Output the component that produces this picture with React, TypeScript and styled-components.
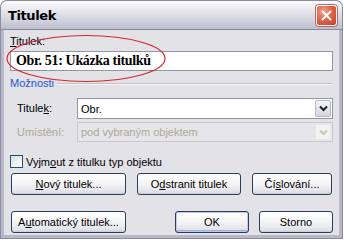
import React from "react";
import styled, { createGlobalStyle } from "styled-components";

const Global = createGlobalStyle`
  html, body { margin: 0; padding: 0; background: #ffffff; }
  body { font-family: Tahoma, "Liberation Sans", Arial, sans-serif; font-size: 11px; color: #000; }
`;

const Window = styled.div`
  width: 343px;
  height: 239px;
  display: flex;
  flex-direction: column;
  position: relative;
`;

const TitleBar = styled.div`
  height: 29px;
  flex: none;
  box-sizing: border-box;
  display: flex;
  align-items: center;
  justify-content: space-between;
  padding: 1px 5px 0 7px;
  border-radius: 7px 7px 0 0;
  border: 1px solid #8b8a9e;
  border-bottom: none;
  background: linear-gradient(#fbfbfd 0%, #e6e6ee 35%, #d2d2de 70%, #bdbdcd 100%);
`;

const TitleText = styled.span`
  font-family: Tahoma, "DejaVu Sans", sans-serif;
  font-weight: bold;
  font-size: 13px;
  letter-spacing: -0.4px;
  color: #000;
`;

const CloseButton = styled.div`
  width: 21px;
  height: 21px;
  box-sizing: border-box;
  border: 1px solid #ffffff;
  border-radius: 3px;
  background: radial-gradient(circle at 35% 30%, #f2a690 0%, #e06448 45%, #c4402c 100%);
  display: flex;
  align-items: center;
  justify-content: center;
  box-shadow: 0 0 0 1px #b86a62;
`;

const Frame = styled.div`
  flex: 1;
  display: flex;
  flex-direction: column;
  box-sizing: border-box;
  border: 4px solid #b9b8ca;
  border-top: none;
  box-shadow: inset 1px 0 0 #e3e3ea, inset -1px 0 0 #e3e3ea;
  outline: 1px solid #8b8a9e;
  outline-offset: -1px;
  background: #e3e2e7;
  padding: 6px 6px 0 6px;
`;

const Label = styled.div<{ $disabled?: boolean; $indent?: number; $width?: number }>`
  line-height: 13px;
  height: 13px;
  color: ${(p) => (p.$disabled ? "#aca899" : "#000")};
  padding-left: ${(p) => p.$indent ?? 0}px;
  width: ${(p) => (p.$width ? `${p.$width}px` : "auto")};
  flex: none;
  white-space: nowrap;
`;

const TextBox = styled.div`
  margin-top: 3px;
  height: 20px;
  box-sizing: border-box;
  border: 1px solid #8f98a3;
  background: #fff;
  display: flex;
  align-items: center;
  padding-left: 5px;
  font-family: "Liberation Serif", "Times New Roman", serif;
  font-weight: bold;
  font-size: 14px;
  letter-spacing: -0.35px;
`;

const GroupHeader = styled.div`
  margin-top: 6px;
  display: flex;
  align-items: center;
  gap: 3px;
  color: #1b55d6;
  height: 13px;
  line-height: 13px;
`;

const GroupLine = styled.div`
  flex: 1;
  height: 1px;
  background: #c4c3cc;
  border-bottom: 1px solid #f5f5f7;
`;

const FieldRow = styled.div<{ $top: number }>`
  margin-top: ${(p) => p.$top}px;
  display: flex;
  align-items: center;
`;

const Select = styled.div<{ $disabled?: boolean }>`
  flex: 1;
  height: ${(p) => (p.$disabled ? 20 : 21)}px;
  box-sizing: border-box;
  border: 1px solid ${(p) => (p.$disabled ? "#c9c9cf" : "#8f98a3")};
  background: ${(p) => (p.$disabled ? "#e6e5ea" : "#fff")};
  color: ${(p) => (p.$disabled ? "#aca899" : "#000")};
  display: flex;
  align-items: center;
  padding-left: 3px;
  padding-right: 1px;
`;

const SelectText = styled.span`
  flex: 1;
`;

const DropButton = styled.div<{ $disabled?: boolean }>`
  width: 16px;
  height: ${(p) => (p.$disabled ? 16 : 17)}px;
  box-sizing: border-box;
  border: 1px solid ${(p) => (p.$disabled ? "#e8e8ec" : "#b7b7c5")};
  border-radius: 2px;
  background: ${(p) =>
    p.$disabled ? "#f3f3f2" : "linear-gradient(#f4f4f8, #d6d6e0)"};
  display: flex;
  align-items: center;
  justify-content: center;
`;

const CheckRow = styled.div`
  margin-top: 13px;
  display: flex;
  align-items: center;
  gap: 3px;
`;

const CheckBox = styled.div`
  width: 13px;
  height: 13px;
  box-sizing: border-box;
  border: 1px solid #1c5180;
  background: linear-gradient(135deg, #dcdcd7, #ffffff);
`;

const ButtonRow = styled.div<{ $top: number }>`
  margin-top: ${(p) => p.$top}px;
  display: flex;
  align-items: center;
  padding-left: 1px;
`;

const Button = styled.div<{ $width: number; $gap?: number; $default?: boolean }>`
  width: ${(p) => p.$width}px;
  margin-left: ${(p) => p.$gap ?? 0}px;
  height: 22px;
  box-sizing: border-box;
  border: 1px solid #2f3c5a;
  border-radius: 3px;
  background: linear-gradient(#ffffff 0%, #f4f4f6 50%, #e4e4ea 85%, #d4d4de 100%);
  box-shadow: ${(p) =>
    p.$default
      ? "inset 0 0 0 1px #b9c9ef, inset 0 -1px 0 1px #9fb2e0"
      : "inset 0 -1px 0 #cfcfda"};
  display: flex;
  align-items: center;
  justify-content: center;
  white-space: nowrap;
`;

const Spacer = styled.div`
  flex: 1;
`;

const Ellipse = styled.svg`
  position: absolute;
  left: 0;
  top: 0;
  pointer-events: none;
`;

const U = styled.span`
  text-decoration: underline;
`;

const Chevron = ({ color }: { color: string }) => (
  <svg width="9" height="7" viewBox="0 0 9 7">
    <path d="M1 1.5 L4.5 5 L8 1.5" fill="none" stroke={color} strokeWidth="2" />
  </svg>
);

export default function App() {
  return (
    <>
      <Global />
      <Window>
        <TitleBar>
          <TitleText>Titulek</TitleText>
          <CloseButton>
            <svg width="11" height="11" viewBox="0 0 11 11">
              <path d="M1.5 1.5 L9.5 9.5 M9.5 1.5 L1.5 9.5" stroke="#fff" strokeWidth="2" strokeLinecap="round" />
            </svg>
          </CloseButton>
        </TitleBar>
        <Frame>
          <Label>
            <U>T</U>itulek:
          </Label>
          <TextBox>Obr. 51: Ukázka titulků</TextBox>
          <GroupHeader>
            Možnosti
            <GroupLine />
          </GroupHeader>
          <FieldRow $top={8}>
            <Label $indent={7} $width={60}>
              Titule<U>k</U>:
            </Label>
            <Select>
              <SelectText>Obr.</SelectText>
              <DropButton>
                <Chevron color="#1e1e2e" />
              </DropButton>
            </Select>
          </FieldRow>
          <FieldRow $top={3}>
            <Label $indent={7} $width={60} $disabled>
              Umístění:
            </Label>
            <Select $disabled>
              <SelectText>pod vybraným objektem</SelectText>
              <DropButton $disabled>
                <Chevron color="#c9c7ba" />
              </DropButton>
            </Select>
          </FieldRow>
          <CheckRow>
            <CheckBox />
            <span>
              Vyjm<U>o</U>ut z titulku typ objektu
            </span>
          </CheckRow>
          <ButtonRow $top={5}>
            <Button $width={115}>
              <span>
                <U>N</U>ový titulek...
              </span>
            </Button>
            <Button $width={104} $gap={11}>
              <span>
                O<U>d</U>stranit titulek
              </span>
            </Button>
            <Button $width={80} $gap={11}>
              <span>
                Čí<U>s</U>lování...
              </span>
            </Button>
          </ButtonRow>
          <ButtonRow $top={16}>
            <Button $width={115}>
              <span>
                A<U>u</U>tomatický titulek...
              </span>
            </Button>
            <Spacer />
            <Button $width={74} $default>
              OK
            </Button>
            <Button $width={74} $gap={10}>
              Storno
            </Button>
          </ButtonRow>
        </Frame>
        <Ellipse width="343" height="239" viewBox="0 0 343 239">
          <ellipse cx="86" cy="58.5" rx="79" ry="23" fill="none" stroke="#d8262e" strokeWidth="1.2" />
        </Ellipse>
      </Window>
    </>
  );
}
